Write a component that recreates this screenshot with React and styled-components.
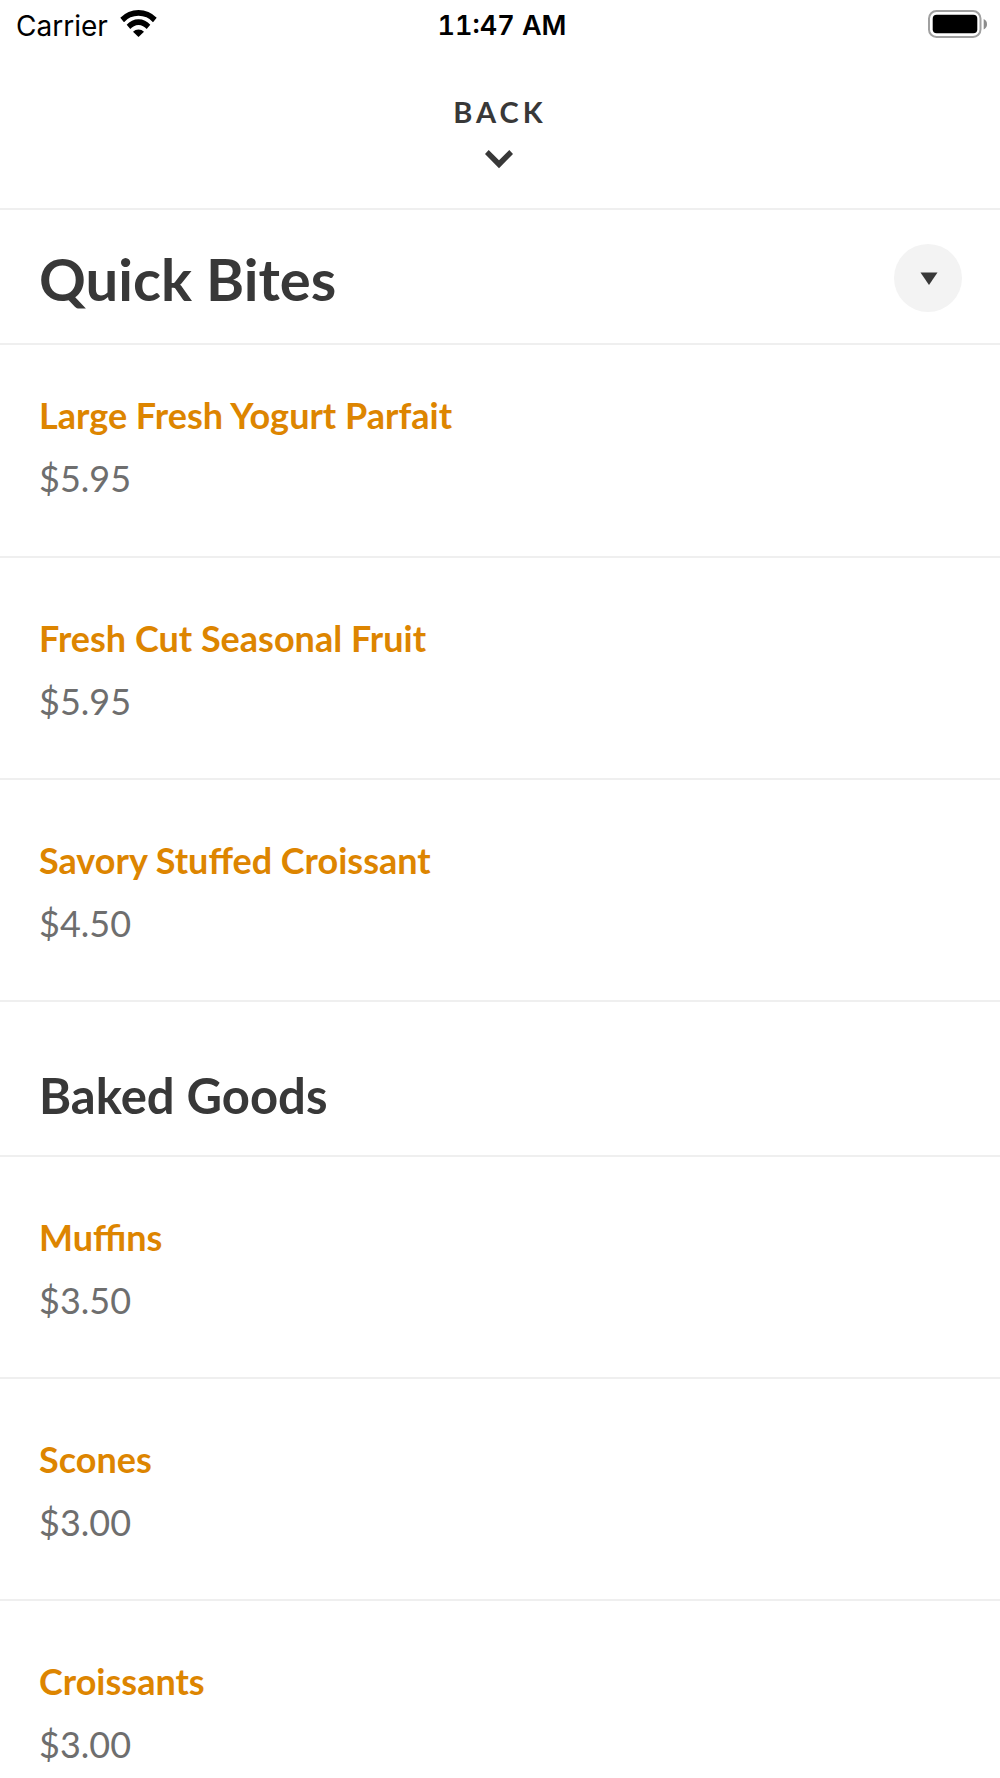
import React from 'react'
import styled, { createGlobalStyle } from 'styled-components'

const quickBites = [
    { name: 'Large Fresh Yogurt Parfait', price: '$5.95' },
    { name: 'Fresh Cut Seasonal Fruit', price: '$5.95' },
    { name: 'Savory Stuffed Croissant', price: '$4.50' },
]

const bakedGoods = [
    { name: 'Muffins', price: '$3.50' },
    { name: 'Scones', price: '$3.00' },
    { name: 'Croissants', price: '$3.00' },
]

function MenuItem({ item, first }) {
    return (
        <Item $first={first}>
            <ItemLink href="#">{item.name}</ItemLink>
            <Price>{item.price}</Price>
        </Item>
    )
}

export default function App() {
    return (
        <Page>
            <GlobalStyle />
            <StatusBar>
                <Carrier>
                    <span>Carrier</span>
                    <svg width="37" height="34" viewBox="0 0 37 34" aria-hidden="true">
                        <path d="M.3 8.800a25 25 0 0 1 36.400 0L33 13.200a19.300 19.300 0 0 0-29 0z" />
                        <path d="M6.700 15.800a15.500 15.500 0 0 1 23.600 0L26.700 20a10.600 10.600 0 0 0-16.400 0z" />
                        <path d="M13 22.800a7.500 7.500 0 0 1 11 0L18.500 28z" />
                    </svg>
                </Carrier>
                <Clock>11:47 AM</Clock>
                <Battery>
                    <svg width="60" height="32" viewBox="0 0 60 32" aria-hidden="true">
                        <rect x="1" y="1" width="51.500" height="26" rx="7.500" fill="none" stroke="#a0a0a0" strokeWidth="2" />
                        <rect x="4.700" y="4.700" width="44.600" height="18.600" rx="4" />
                        <path d="M55.700 9c2.200 1 3.300 2.900 3.300 5.200s-1.100 4.200-3.300 5.200z" fill="#8c8c8c" />
                    </svg>
                </Battery>
            </StatusBar>
            <BackButton type="button">
                <span>BACK</span>
                <svg width="31" height="19" viewBox="0 0 31 19" aria-hidden="true">
                    <path d="M3.700 0L14 10.300 24.300 0 28 4 14 18.300 0 4z" fill="currentColor" />
                </svg>
            </BackButton>
            <SectionHeader>
                <Title>Quick Bites</Title>
                <ToggleButton type="button" aria-label="Choose a section">
                    <svg width="20" height="14" viewBox="0 0 20 14" aria-hidden="true">
                        <path d="M2.500 1.500h17L11 14z" fill="currentColor" />
                    </svg>
                </ToggleButton>
            </SectionHeader>
            <List>
                {quickBites.map((item, i) => <MenuItem key={item.name} item={item} first={i === 0} />)}
            </List>
            <Subtitle>Baked Goods</Subtitle>
            <List>
                {bakedGoods.map((item) => <MenuItem key={item.name} item={item} />)}
            </List>
        </Page>
    )
}

const GlobalStyle = createGlobalStyle`
    * {
        box-sizing: border-box;
    }
    body {
        margin: 0;
        background: #fff;
        color: #383838;
        font-family: Lato, sans-serif;
    }
`;

const Page = styled.main`
    height: 100vh;
    overflow-y: auto;
    scrollbar-width: none;
`;

const StatusBar = styled.header`
    display: grid;
    grid-template-columns: 1fr auto 1fr;
    align-items: center;
    height: 52px;
    padding: 0 12px 0 16px;
    color: #000;
    font-family: Inter, sans-serif;
    font-size: 28px;
    line-height: 34px;
`;

const Carrier = styled.div`
    display: flex;
    align-items: center;
    gap: 12px;
`;

const Clock = styled.time`
    font-size: 27px;
    font-weight: 600;
    font-variant-numeric: tabular-nums;
`;

const Battery = styled.div`
    display: flex;
    justify-content: flex-end;
`;

const BackButton = styled.button`
    display: flex;
    flex-direction: column;
    align-items: center;
    gap: 20px;
    width: 100%;
    height: 158px;
    padding: 42px 0 0;
    border: 0;
    border-bottom: 2px solid #efefef;
    background: none;
    color: #383838;
    font: 700 29px/36px Lato, sans-serif;
    letter-spacing: 4px;
`;

const SectionHeader = styled.div`
    display: flex;
    align-items: center;
    justify-content: space-between;
    height: 135px;
    padding: 3px 38px 0 39px;
    border-bottom: 2px solid #efefef;
`;

const Title = styled.h1`
    margin: 0;
    padding-top: 2px;
    font-size: 58px;
    font-weight: 700;
    line-height: 72px;
`;

const ToggleButton = styled.button`
    display: flex;
    align-items: center;
    justify-content: center;
    width: 68px;
    height: 68px;
    padding: 0;
    border: 0;
    border-radius: 50%;
    background: #f3f3f3;
    color: #383838;
`;

const List = styled.ul`
    margin: 0;
    padding: 0;
    list-style: none;
`;

const Item = styled.li`
    display: flex;
    flex-direction: column;
    align-items: flex-start;
    gap: 19px;
    padding: ${({ $first }) => ($first ? '48px 39px 56px' : '58px 39px 55px')};
    border-bottom: 2px solid #efefef;
    line-height: 44px;
`;

const ItemLink = styled.a`
    color: #dd8500;
    font-size: 36px;
    font-weight: 700;
    text-decoration: none;
`;

const Price = styled.span`
    color: #6e6e6e;
    font-size: 36px;
`;

const Subtitle = styled.h2`
    margin: 0;
    padding: 64px 39px 31px;
    border-bottom: 2px solid #efefef;
    font-size: 49px;
    font-weight: 700;
    line-height: 58px;
`;
